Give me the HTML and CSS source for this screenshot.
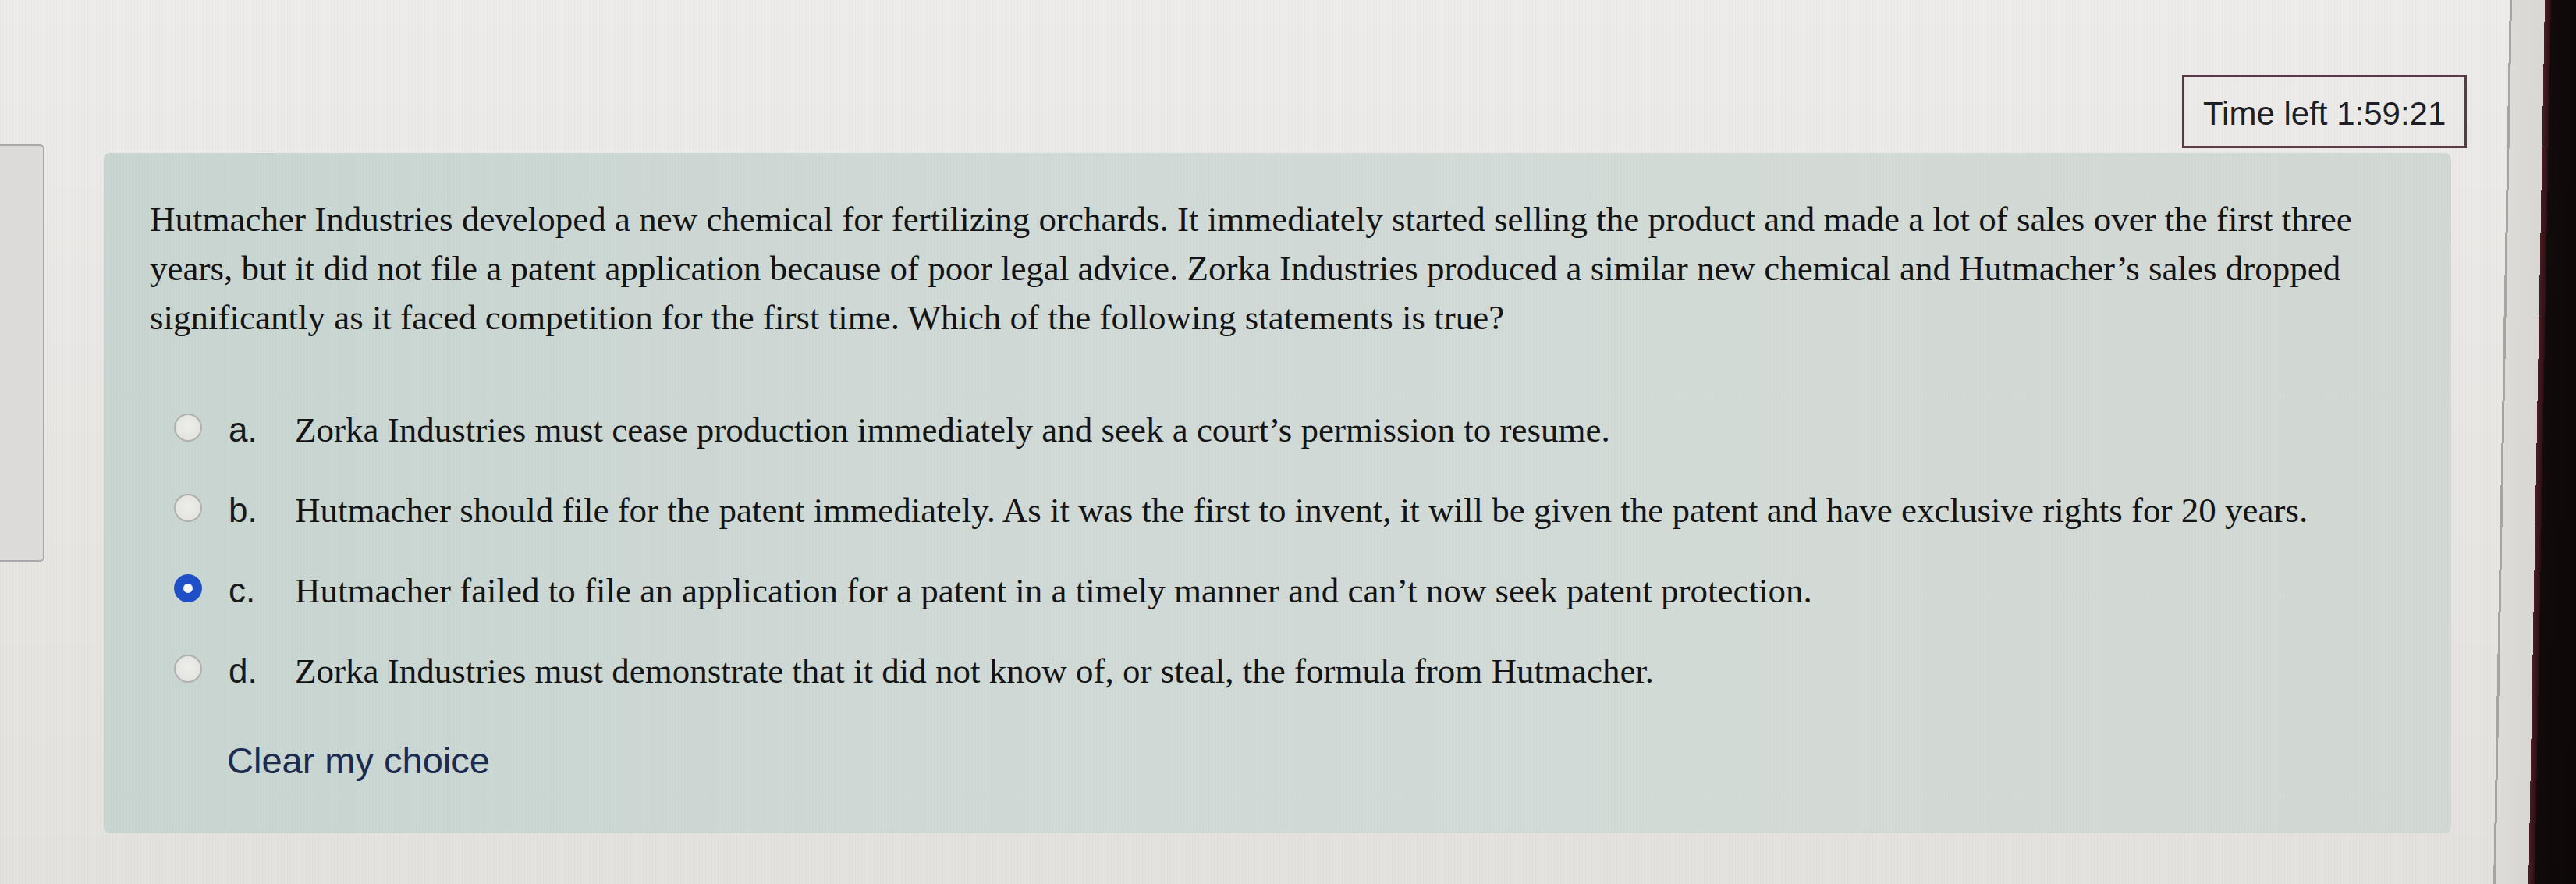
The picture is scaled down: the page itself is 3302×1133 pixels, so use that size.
FILE: index.html
```html
<!DOCTYPE html>
<html lang="en">
<head>
<meta charset="utf-8">
<title>Quiz question</title>
<link rel="stylesheet" href="styles.css">
</head>
<body>
<div class="screen">
  <aside class="sidebar"></aside>
  <main class="main">
    <div class="timer-row">
      <div class="timer">Time left 1:59:21</div>
    </div>
    <section class="question">
      <p class="qtext">Hutmacher Industries developed a new chemical for fertilizing orchards. It immediately started selling the product and made a lot of sales over the first three years, but it did not file a patent application because of poor legal advice. Zorka Industries produced a similar new chemical and Hutmacher’s sales dropped significantly as it faced competition for the first time. Which of the following statements is true?</p>
      <div class="answers">
        <div class="option"><span class="radio"></span><span class="letter">a.</span><span class="atext">Zorka Industries must cease production immediately and seek a court’s permission to resume.</span></div>
        <div class="option"><span class="radio"></span><span class="letter">b.</span><span class="atext">Hutmacher should file for the patent immediately. As it was the first to invent, it will be given the patent and have exclusive rights for 20 years.</span></div>
        <div class="option"><span class="radio checked"></span><span class="letter">c.</span><span class="atext">Hutmacher failed to file an application for a patent in a timely manner and can’t now seek patent protection.</span></div>
        <div class="option"><span class="radio"></span><span class="letter">d.</span><span class="atext">Zorka Industries must demonstrate that it did not know of, or steal, the formula from Hutmacher.</span></div>
      </div>
      <a class="clear" href="#">Clear my choice</a>
    </section>
  </main>
  <div class="edge"></div>
</div>
</body>
</html>
```

FILE: styles.css
```css
html, body {
  margin: 0;
  padding: 0;
}

body {
  width: 3302px;
  height: 1133px;
  overflow: hidden;
  background: #e6e5e2;
}

.screen {
  display: flex;
  width: 3302px;
  height: 1133px;
  background:
    repeating-linear-gradient(90deg, rgba(0, 0, 0, 0.018) 0 1px, transparent 1px 4px),
    linear-gradient(180deg, #edecea 0%, #e8e7e4 45%, #e3e2de 100%);
}

.sidebar {
  flex: none;
  box-sizing: border-box;
  width: 57px;
  height: 535px;
  margin-top: 185px;
  background: #dcdbd9;
  border: 2px solid #a9a9ab;
  border-left: none;
  border-radius: 0 6px 6px 0;
}

.main {
  flex: none;
  width: 3029px;
  margin-left: 76px;
  padding-top: 96px;
}

.timer-row {
  display: flex;
  justify-content: flex-end;
}

.timer {
  box-sizing: border-box;
  width: 365px;
  height: 94px;
  padding: 6px 0 0 24px;
  border: 3px solid #5b3a47;
  font-family: "Liberation Sans", Arial, sans-serif;
  font-size: 42px;
  line-height: 82px;
  color: #1e1e26;
  white-space: nowrap;
}

.question {
  box-sizing: border-box;
  height: 872px;
  margin-top: 6px;
  margin-right: 20px;
  padding: 54px 30px 0 59px;
  border-radius: 8px;
  background:
    repeating-linear-gradient(90deg, rgba(0, 0, 0, 0.015) 0 1px, transparent 1px 4px),
    linear-gradient(90deg, #c8d5d1 0%, #cfd9d5 35%, #d3dbd7 70%, #d2d8d4 100%);
}

.qtext {
  margin: 0;
  font-family: "Liberation Serif", "Times New Roman", serif;
  font-size: 45px;
  line-height: 63px;
  color: #141414;
}

.answers {
  margin-top: 60px;
  padding-left: 31px;
}

.option {
  box-sizing: border-box;
  height: 103px;
  padding: 18px 0;
  line-height: 67px;
  white-space: nowrap;
  font-family: "Liberation Sans", Arial, sans-serif;
  font-size: 44px;
  color: #1a1a1a;
}

.radio {
  display: inline-block;
  box-sizing: border-box;
  width: 36px;
  height: 36px;
  margin-right: 34px;
  border-radius: 50%;
  border: 2px solid #b0b1ad;
  background: radial-gradient(circle at 50% 45%, #eeeeeb 0%, #dfe0dc 100%);
  vertical-align: baseline;
}

.radio.checked {
  border: 12px solid #1e4fc6;
  background: #f4f6fb;
}

.letter {
  display: inline-block;
  width: 85px;
}

.atext {
  font-family: "Liberation Serif", "Times New Roman", serif;
  font-size: 45px;
  color: #141414;
}

.clear {
  display: block;
  margin-top: 30px;
  margin-left: 99px;
  font-family: "Liberation Sans", Arial, sans-serif;
  font-size: 47px;
  line-height: 67px;
  color: #1c2b4f;
  text-decoration: none;
}

.edge {
  flex: none;
  width: 140px;
  height: 1133px;
  background: linear-gradient(91.06deg,
    transparent 0px, transparent 55px,
    #a6a5a1 55px, #a6a5a1 58px,
    #dcdbd7 58px, #d8d7d3 100px,
    #4a1c22 100px, #2a1014 108px,
    #120a0b 108px, #0c0707 100%);
}
```
